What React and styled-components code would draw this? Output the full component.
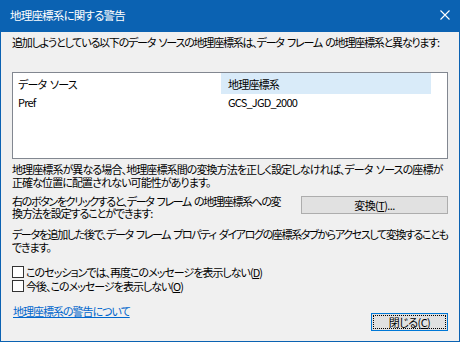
import React from "react";
import styled, { createGlobalStyle } from "styled-components";

const Global = createGlobalStyle`
  html, body { margin: 0; padding: 0; background: #f0f0f0; }
  body {
    font-family: "Noto Sans CJK JP", "Noto Sans", sans-serif;
    font-size: 11px;
    font-feature-settings: "palt";
    color: #000;
  }
`;

const blue = "#0b62b2";

const Window = styled.div`
  width: 460px;
  height: 342px;
  box-sizing: border-box;
  border: 1px solid ${blue};
  border-top: none;
  display: flex;
  flex-direction: column;
  background: #f0f0f0;
  overflow: hidden;
`;

const TitleBar = styled.div`
  height: 30px;
  flex: none;
  background: ${blue};
  display: flex;
  align-items: center;
  justify-content: space-between;
  padding: 0 9px 2px 9px;
  color: #fff;
`;

const Title = styled.span`
  font-size: 11.5px;
  letter-spacing: -0.8px;
`;

const Body = styled.div`
  flex: 1;
  display: flex;
  flex-direction: column;
  padding: 0 11px 0 10px;
`;

const Text = styled.div`
  white-space: nowrap;
  line-height: ${(p) => p.$lh || 13}px;
  margin-top: ${(p) => p.$mt || 0}px;
  margin-left: 1px;
  word-spacing: 2px;
`;

const Line = styled.span`
  display: block;
  letter-spacing: ${(p) => p.$ls ?? -1}px;
`;

const ListBox = styled.div`
  margin: ${(p) => p.$mt}px 0 0 1px;
  height: 87px;
  box-sizing: border-box;
  border: 1px solid #828790;
  background: #fff;
  display: grid;
  grid-template-columns: 208px 210px 1fr;
  grid-template-rows: 21px 15px 1fr;
`;

const Cell = styled.div`
  display: flex;
  align-items: center;
  padding-left: ${(p) => p.$pl || 0}px;
  background: ${(p) => (p.$sel ? "#d9ebf9" : "transparent")};
  white-space: nowrap;
  letter-spacing: -0.8px;
  word-spacing: 2px;
`;

const Row = styled.div`
  display: flex;
  justify-content: space-between;
  align-items: flex-start;
  margin-top: ${(p) => p.$mt}px;
`;

const Button = styled.button`
  font: inherit;
  font-size: 11px;
  color: #000;
  width: ${(p) => p.$w}px;
  height: 18px;
  padding: 0;
  background: #e1e1e1;
  border: 1px solid ${(p) => (p.$focus ? "#0078d7" : "#adadad")};
  display: flex;
  align-items: center;
  justify-content: center;
  letter-spacing: -0.6px;
  position: relative;
  flex: none;
  margin-top: ${(p) => p.$mt || 0}px;
  &::after {
    content: "";
    display: ${(p) => (p.$focus ? "block" : "none")};
    position: absolute;
    inset: 1px;
    border: 1px dotted #000;
  }
`;

const Check = styled.label`
  display: flex;
  align-items: center;
  gap: 2px;
  height: 14px;
  margin-top: ${(p) => p.$mt}px;
  margin-left: 1px;
  white-space: nowrap;
  letter-spacing: -1px;
`;

const Box = styled.span`
  width: 10px;
  height: 10px;
  border: 1px solid #333;
  background: #fff;
  flex: none;
`;

const U = styled.span`
  text-decoration: underline;
`;

const Footer = styled.div`
  display: flex;
  justify-content: space-between;
  align-items: flex-start;
  margin-top: ${(p) => p.$mt}px;
  padding-left: 2px;
`;

const Link = styled.a`
  color: #0066cc;
  text-decoration: underline;
  letter-spacing: -1px;
  line-height: 13px;
  white-space: nowrap;
`;

export default function App() {
  return (
    <>
      <Global />
      <Window>
        <TitleBar>
          <Title>地理座標系に関する警告</Title>
          <svg width="10" height="10" viewBox="0 0 10 10">
            <path d="M0.5 0.5 L9.5 9.5 M9.5 0.5 L0.5 9.5" stroke="#fff" strokeWidth="1.1" />
          </svg>
        </TitleBar>
        <Body>
          <Text $mt={4}>
            <Line $ls={-1.2}>
              追加しようとしている以下のデータ ソースの地理座標系は、データ フレーム の地理座標系と異なります:
            </Line>
          </Text>
          <ListBox $mt={23}>
            <Cell $pl={5}>データ ソース</Cell>
            <Cell $pl={7} $sel>地理座標系</Cell>
            <Cell />
            <Cell $pl={5}>Pref</Cell>
            <Cell $pl={7}>GCS_JGD_2000</Cell>
            <Cell />
          </ListBox>
          <Text $mt={4}>
            <Line $ls={-0.9}>
              地理座標系が異なる場合、地理座標系間の変換方法を正しく設定しなければ、データ ソースの座標が
            </Line>
            <Line $ls={-0.9}>正確な位置に配置されない可能性があります。</Line>
          </Text>
          <Row $mt={4}>
            <Text $mt={2} $lh={12}>
              <Line $ls={-1.35}>右のボタンをクリックすると、データ フレーム の地理座標系への変</Line>
              <Line $ls={-1.1}>換方法を設定することができます:</Line>
            </Text>
            <Button $w={147} $mt={3}>
              変換(<U>T</U>)...
            </Button>
          </Row>
          <Text $mt={9}>
            <Line $ls={-1.35}>
              データを追加した後で、データ フレーム プロパティ ダイアログの座標系タブからアクセスして変換することも
            </Line>
            <Line $ls={-1.1}>できます。</Line>
          </Text>
          <Check $mt={11}>
            <Box />
            <span>
              このセッションでは、再度このメッセージを表示しない(<U>D</U>)
            </span>
          </Check>
          <Check $mt={0}>
            <Box />
            <span>
              今後、このメッセージを表示しない(<U>O</U>)
            </span>
          </Check>
          <Footer $mt={12}>
            <Link href="#">地理座標系の警告について</Link>
            <Button $w={77} $focus $mt={8}>
              閉じる(<U>C</U>)
            </Button>
          </Footer>
        </Body>
      </Window>
    </>
  );
}
